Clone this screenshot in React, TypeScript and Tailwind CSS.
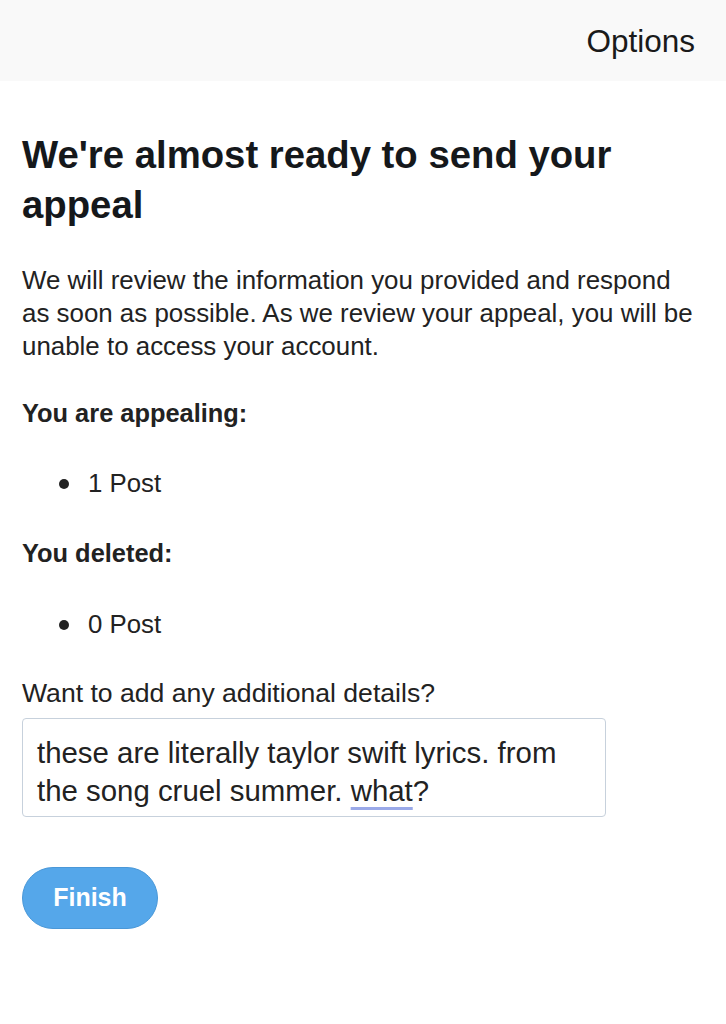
import React from "react";

export default function App() {
  return (
    <div className="w-[726px] h-[1024px] bg-white text-[#14171a]" style={{ fontFamily: '"Liberation Sans", Arial, sans-serif' }}>
      <div className="h-[81px] bg-[#f9f9f9] flex items-start justify-end pr-[31px] pt-[22px]">
        <span className="text-[31.5px] leading-[38px] text-[#1a1a1a]">Options</span>
      </div>
      <div className="px-[22px] pt-[49px]">
        <h1 className="text-[38.3px] leading-[50px] font-bold text-[#15181b]">We're almost ready to send your appeal</h1>
        <p className="mt-[34px] text-[25.9px] leading-[33px] text-[#222]">
          We will review the information you provided and respond as soon as possible. As we review your appeal, you will be unable to access your account.
        </p>
        <p className="mt-[34px] text-[25.4px] leading-[33px] font-bold text-[#222]">You are appealing:</p>
        <ul className="mt-[37px] pl-[37px] text-[25.8px] leading-[33px] text-[#222]">
          <li className="flex items-center gap-[19px]"><span className="w-[10px] h-[10px] rounded-full bg-[#222]"></span>1 Post</li>
        </ul>
        <p className="mt-[37px] text-[25.4px] leading-[33px] font-bold text-[#222]">You deleted:</p>
        <ul className="mt-[38px] pl-[37px] text-[25.8px] leading-[33px] text-[#222]">
          <li className="flex items-center gap-[19px]"><span className="w-[10px] h-[10px] rounded-full bg-[#222]"></span>0 Post</li>
        </ul>
        <p className="mt-[36px] text-[26.6px] leading-[33px] text-[#222]">Want to add any additional details?</p>
        <div className="mt-[8px] w-[584px] h-[99px] border border-[#c7d1dc] rounded-[4px] px-[14px] pt-[15px] text-[29.4px] leading-[38px] text-[#222]">
          these are literally taylor swift lyrics. from the song cruel summer.{" "}
          <span className="underline decoration-[#9aa9e8] decoration-[3px] underline-offset-[6px]">what</span>?
        </div>
        <button className="mt-[50px] w-[136px] h-[62px] rounded-full bg-[#55a7ea] border border-[#4a98d8] text-white font-bold text-[25px]">Finish</button>
      </div>
    </div>
  );
}
